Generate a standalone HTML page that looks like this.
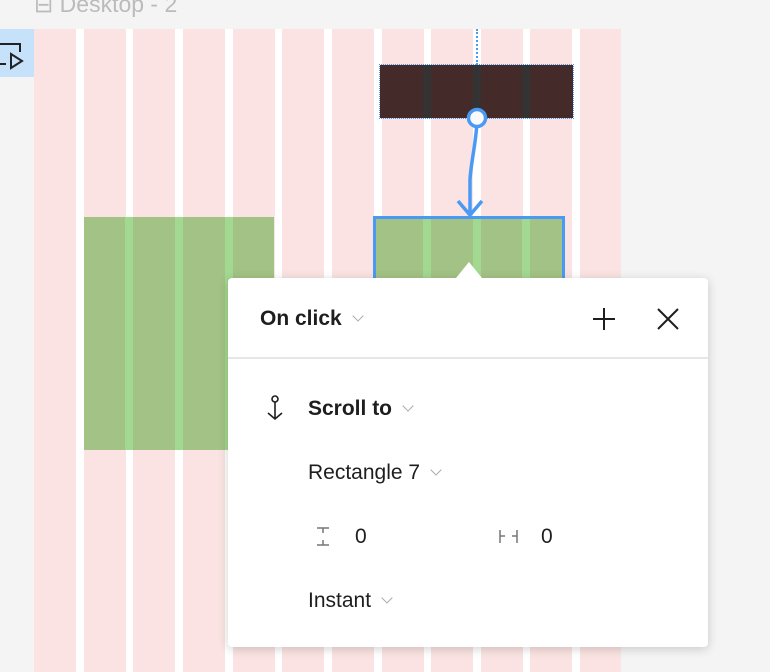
<!DOCTYPE html>
<html><head><style>
body{margin:0;width:770px;height:672px;background:#f4f4f4;position:relative;overflow:hidden;font-family:"Liberation Sans",Arial,sans-serif}
.a{position:absolute}
.col{position:absolute;top:29px;height:643px;width:42px;background:#fae3e2}
.t{position:absolute;color:#1e1e1e;font-size:21px}
.chev{display:inline-block;width:7px;height:7px;border-right:1.5px solid #aaa;border-bottom:1.5px solid #aaa;transform:rotate(45deg);margin-left:12px;position:relative;top:-5px}
</style></head><body>
<div class="a" style="left:34px;top:-9px;font-size:23px;color:#bbb">&#8863; Desktop - 2</div>
<div class="a" style="left:34px;top:29px;width:587px;height:643px;background:#fff"></div>
<div class="col" style="left:34px"></div><div class="col" style="left:84px"></div><div class="col" style="left:133px"></div><div class="col" style="left:183px"></div><div class="col" style="left:233px"></div><div class="col" style="left:282px"></div><div class="col" style="left:332px"></div><div class="col" style="left:382px"></div><div class="col" style="left:431px"></div><div class="col" style="left:481px"></div><div class="col" style="left:530px"></div><div class="col" style="left:580px;width:41px"></div>
<div class="a" style="left:0;top:29px;width:34px;height:48px;background:#c6e2fb"></div>
<svg class="a" style="left:0;top:40px" width="26" height="30"><path d="M0 4H20V12M0 24H6M11 14V28L22 21Z" fill="none" stroke="#222" stroke-width="2"/></svg>
<div class="a" style="left:380px;top:65px;width:193px;height:53px;background:#452a2a;outline:1.5px dotted #4a9af5"></div>
<div class="a" style="left:423px;top:65px;width:8px;height:53px;background:#333"></div>
<div class="a" style="left:473px;top:65px;width:8px;height:53px;background:#333"></div>
<div class="a" style="left:522px;top:65px;width:8px;height:53px;background:#333"></div>
<div class="a" style="left:476px;top:29px;height:36px;border-left:2px dotted #4a9af5"></div>
<div class="a" style="left:84px;top:217px;width:190px;height:233px;background:#a3c285"></div>
<div class="a" style="left:125px;top:217px;width:8px;height:233px;background:#a3d890"></div>
<div class="a" style="left:175px;top:217px;width:8px;height:233px;background:#a3d890"></div>
<div class="a" style="left:225px;top:217px;width:8px;height:233px;background:#a3d890"></div>
<div class="a" style="left:373px;top:216px;width:186px;height:80px;background:#a3c285;border:3px solid #4a9af5"></div>
<div class="a" style="left:423px;top:219px;width:8px;height:70px;background:#a3d890"></div>
<div class="a" style="left:473px;top:219px;width:8px;height:70px;background:#a3d890"></div>
<div class="a" style="left:522px;top:219px;width:8px;height:70px;background:#a3d890"></div>
<svg class="a" style="left:440px;top:100px" width="60" height="120"><path d="M37 18C37 40 31 60 30 80V115M18 101L30 115L42 101" fill="none" stroke="#4a9af5" stroke-width="3.5"/><circle cx="37" cy="18" r="8.5" fill="#fafafa" stroke="#4a9af5" stroke-width="3.5"/></svg>
<div class="a" style="left:228px;top:278px;width:480px;height:369px;background:#fff;border-radius:4px;box-shadow:0 2px 10px rgba(0,0,0,.18)"></div>
<div class="a" style="left:456px;top:262px;width:0;height:0;border-left:13px solid transparent;border-right:13px solid transparent;border-bottom:16px solid #fff"></div>
<div class="a" style="left:228px;top:357px;width:480px;height:2px;background:#e6e6e6"></div>
<div class="t" style="left:260px;top:307px;font-weight:bold">On click<span class="chev"></span></div>
<svg class="a" style="left:592px;top:307px" width="24" height="24"><path d="M12 1V23M1 12H23" stroke="#1e1e1e" stroke-width="2"/></svg>
<svg class="a" style="left:656px;top:307px" width="24" height="24"><path d="M2 2L22 22M22 2L2 22" stroke="#1e1e1e" stroke-width="2"/></svg>
<svg class="a" style="left:264px;top:394px" width="24" height="28"><circle cx="11" cy="5" r="3" fill="none" stroke="#1e1e1e" stroke-width="1.6"/><path d="M11 8V25M4 19L11 25L18 19" fill="none" stroke="#1e1e1e" stroke-width="1.6"/></svg>
<div class="t" style="left:308px;top:397px;font-weight:bold">Scroll to<span class="chev"></span></div>
<div class="t" style="left:308px;top:461px">Rectangle 7<span class="chev"></span></div>
<svg class="a" style="left:314px;top:526px" width="20" height="22"><path d="M3 2H15M9 2V7M9 14V19M3 19H15" stroke="#777" stroke-width="1.5"/></svg>
<div class="t" style="left:355px;top:525px">0</div>
<svg class="a" style="left:497px;top:528px" width="26" height="18"><path d="M3 2V15M3 8H8M15 8H20M20 2V15" stroke="#777" stroke-width="1.5"/></svg>
<div class="t" style="left:541px;top:525px">0</div>
<div class="t" style="left:308px;top:589px">Instant<span class="chev"></span></div>
</body></html>
